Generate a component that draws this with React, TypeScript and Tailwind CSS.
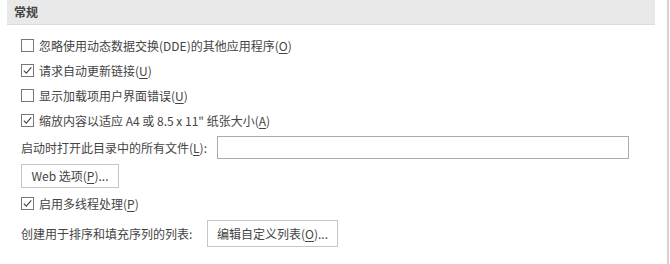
import type { ReactNode } from 'react'

const font = { fontFamily: '"Noto Sans CJK SC", "Microsoft YaHei", sans-serif' }

function Box({ checked }: { checked: boolean }) {
  return (
    <span className="flex h-[13px] w-[13px] shrink-0 items-center justify-center border border-[#777] bg-white">
      {checked && (
        <svg width="11" height="11" viewBox="0 0 11 11" fill="none">
          <path d="M1.8 5.6 L4.3 8.2 L9.3 2.4" stroke="#444" strokeWidth="1.1" />
        </svg>
      )}
    </span>
  )
}

function Check({ checked, children }: { checked: boolean; children: ReactNode }) {
  return (
    <div className="flex h-[25px] items-center gap-[5px] pl-[21px]">
      <Box checked={checked} />
      <span className="whitespace-nowrap">{children}</span>
    </div>
  )
}

const U = ({ children }: { children: ReactNode }) => <span className="underline underline-offset-2">{children}</span>

export default function App() {
  return (
    <div className="relative h-[264px] w-[670px] overflow-hidden bg-white text-[12px] leading-none text-[#444]" style={font}>
      {/* General header */}
      <div className="ml-[7px] flex h-[25px] w-[648px] items-center border-b border-[#dcdcdc] bg-[#e9e9e9] pl-[7px] font-bold text-[#444]">
        常规
      </div>

      <div className="mt-[8px] flex flex-col">
        <Check checked={false}>忽略使用动态数据交换(DDE)的其他应用程序(<U>O</U>)</Check>
        <Check checked>请求自动更新链接(<U>U</U>)</Check>
        <Check checked={false}>显示加载项用户界面错误(<U>U</U>)</Check>
        <Check checked>缩放内容以适应 A4 或 8.5 x 11" 纸张大小(<U>A</U>)</Check>

        <div className="mt-[3px] flex h-[23px] items-center pl-[21px]">
          <span className="w-[196px] whitespace-nowrap">启动时打开此目录中的所有文件(<U>L</U>):</span>
          <div className="h-[23px] w-[412px] border border-[#ababab] bg-white" />
        </div>

        <div className="mt-[5px] pl-[21px]">
          <button className="flex h-[24px] w-[98px] items-center justify-center border border-[#c6c6c6] bg-white text-[12px] text-[#444]">
            Web 选项(<U>P</U>)...
          </button>
        </div>

        <div className="mt-[3px]">
          <Check checked>启用多线程处理(<U>P</U>)</Check>
        </div>

        <div className="mt-[4px] flex items-center pl-[21px]">
          <span className="w-[186px] whitespace-nowrap">创建用于排序和填充序列的列表:</span>
          <button className="flex h-[27px] w-[131px] items-center justify-center border border-[#c6c6c6] bg-white text-[12px] text-[#444]">
            编辑自定义列表(<U>O</U>)...
          </button>
        </div>
      </div>

      {/* right edge scrollbar line */}
      <div className="absolute right-[1px] top-0 h-full w-[2px] bg-[#d4d4d4]" />
    </div>
  )
}
